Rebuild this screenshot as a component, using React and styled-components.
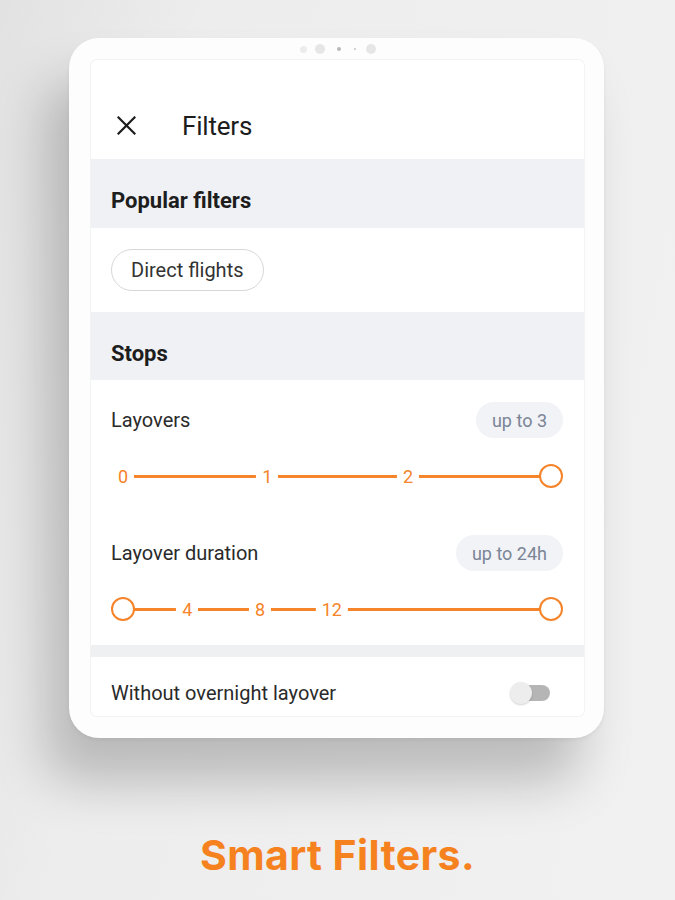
import React from "react";
import styled, { createGlobalStyle } from "styled-components";

const ORANGE = "#f5842a";

const Global = createGlobalStyle`
  html, body { margin: 0; padding: 0; }
  body {
    background: #efefef;
    font-family: Roboto, "Noto Sans", Arial, sans-serif;
  }
`;

const Page = styled.div`
  width: 675px;
  height: 900px;
  box-sizing: border-box;
  padding-top: 38px;
  display: flex;
  flex-direction: column;
  align-items: center;
  background: linear-gradient(100deg, #e2e2e2 0%, #ededed 25%, #f1f1f1 100%);
  overflow: hidden;
`;

const Tablet = styled.div`
  width: 535px;
  height: 700px;
  box-sizing: border-box;
  margin-right: 2px;
  padding: 0 20px 22px 22px;
  background: #fdfdfd;
  border-radius: 30px;
  display: flex;
  flex-direction: column;
  box-shadow: -24px 44px 52px rgba(0, 0, 0, 0.22), 0 2px 4px rgba(0, 0, 0, 0.05);
`;

const CameraBar = styled.div`
  height: 22px;
  display: flex;
  align-items: center;
  justify-content: center;
`;

const Dot = styled.span`
  width: ${(p) => p.$s}px;
  height: ${(p) => p.$s}px;
  margin-left: ${(p) => p.$ml || 0}px;
  border-radius: 50%;
  background: ${(p) => p.$c};
`;

const Screen = styled.div`
  flex: 1;
  background: #ffffff;
  border-radius: 6px;
  overflow: hidden;
  display: flex;
  flex-direction: column;
  box-shadow: 0 0 0 1px #f3f3f3;
`;

const Header = styled.div`
  height: 99px;
  flex: none;
  box-sizing: border-box;
  padding: 32px 0 0 26px;
  display: flex;
  align-items: center;
  gap: 46px;
`;

const Title = styled.div`
  font-size: 26px;
  color: #1c1c1c;
  font-weight: 400;
  letter-spacing: -0.2px;
`;

const SectionHead = styled.div`
  height: ${(p) => p.$h}px;
  flex: none;
  box-sizing: border-box;
  background: #eff1f4;
  display: flex;
  align-items: center;
  padding: 14px 20px 0;
  font-size: 22px;
  font-weight: 700;
  color: #1d1d1d;
`;

const ChipArea = styled.div`
  height: 84px;
  flex: none;
  box-sizing: border-box;
  padding: 21px 20px 0;
`;

const Chip = styled.div`
  display: inline-flex;
  align-items: center;
  height: 42px;
  box-sizing: border-box;
  padding: 0 19px;
  border: 1px solid #d6d8db;
  border-radius: 21px;
  font-size: 20px;
  color: #333;
`;

const Block = styled.div`
  flex: none;
  padding: 22px 21px 24px 20px;
  display: flex;
  flex-direction: column;
`;

const LabelRow = styled.div`
  height: 36px;
  display: flex;
  align-items: center;
  justify-content: space-between;
  margin-top: ${(p) => p.$mt || 0}px;
`;

const Label = styled.div`
  font-size: 20px;
  color: #2a2a2a;
`;

const Badge = styled.div`
  height: 36px;
  box-sizing: border-box;
  padding: 0 16px;
  display: flex;
  align-items: center;
  border-radius: 18px;
  background: #f1f3f6;
  color: #7b8597;
  font-size: 18px;
`;

const Slider = styled.div`
  position: relative;
  height: 24px;
  margin-top: 26px;
`;

const Track = styled.div`
  position: absolute;
  left: 12px;
  right: 12px;
  top: 11px;
  height: 2.5px;
  background: ${ORANGE};
`;

const Tick = styled.span`
  position: absolute;
  top: 0;
  height: 24px;
  display: flex;
  align-items: center;
  transform: translateX(-50%);
  background: #fff;
  padding: 0 6px;
  font-size: 18px;
  color: ${ORANGE};
`;

const Thumb = styled.span`
  position: absolute;
  top: 0;
  width: 24px;
  height: 24px;
  box-sizing: border-box;
  transform: translateX(-50%);
  border-radius: 50%;
  border: 2.5px solid ${ORANGE};
  background: #fff;
`;

const Divider = styled.div`
  height: 12px;
  flex: none;
  background: #eff0f2;
`;

const ToggleRow = styled.div`
  height: 72px;
  flex: none;
  display: flex;
  align-items: center;
  justify-content: space-between;
  padding: 0 34px 0 20px;
`;

const Switch = styled.div`
  position: relative;
  width: 40px;
  height: 24px;
`;

const SwitchTrack = styled.span`
  position: absolute;
  left: 6px;
  right: 0;
  top: 4px;
  height: 16px;
  border-radius: 8px;
  background: #b5b5b5;
`;

const SwitchThumb = styled.span`
  position: absolute;
  left: 0;
  top: 1px;
  width: 22px;
  height: 22px;
  border-radius: 50%;
  background: #ededed;
  box-shadow: 0 1px 2px rgba(0, 0, 0, 0.18);
`;

const Tagline = styled.div`
  margin-top: 92px;
  font-family: Inter, "Noto Sans", sans-serif;
  font-size: 41px;
  font-weight: 700;
  letter-spacing: 0.4px;
  color: #f5821f;
`;

const pos = (p) => `calc(12px + ${p} * (100% - 24px))`;

function RangeSlider({ ticks, thumbs }) {
  return (
    <Slider>
      <Track />
      {ticks.map((t) => (
        <Tick key={t.label} style={{ left: pos(t.p) }}>
          {t.label}
        </Tick>
      ))}
      {thumbs.map((p) => (
        <Thumb key={p} style={{ left: pos(p) }} />
      ))}
    </Slider>
  );
}

function CloseIcon() {
  return (
    <svg width="19" height="19" viewBox="0 0 19 19">
      <path d="M1.5 1.5 L17.5 17.5 M17.5 1.5 L1.5 17.5" stroke="#1c1c1c" strokeWidth="2.2" strokeLinecap="square" />
    </svg>
  );
}

export default function App() {
  return (
    <>
      <Global />
      <Page>
        <Tablet>
          <CameraBar>
            <Dot $s={7} $c="#ececec" />
            <Dot $s={10} $c="#e6e6e6" $ml={8} />
            <Dot $s={4} $c="#b9b9b9" $ml={12} />
            <Dot $s={2} $c="#c4c4c4" $ml={13} />
            <Dot $s={10} $c="#e6e6e6" $ml={10} />
          </CameraBar>
          <Screen>
            <Header>
              <CloseIcon />
              <Title>Filters</Title>
            </Header>
            <SectionHead $h={69}>Popular filters</SectionHead>
            <ChipArea>
              <Chip>Direct flights</Chip>
            </ChipArea>
            <SectionHead $h={68}>Stops</SectionHead>
            <Block>
              <LabelRow>
                <Label>Layovers</Label>
                <Badge>up to 3</Badge>
              </LabelRow>
              <RangeSlider
                ticks={[
                  { label: "0", p: 0 },
                  { label: "1", p: 0.337 },
                  { label: "2", p: 0.666 },
                ]}
                thumbs={[1]}
              />
              <LabelRow $mt={47}>
                <Label>Layover duration</Label>
                <Badge>up to 24h</Badge>
              </LabelRow>
              <RangeSlider
                ticks={[
                  { label: "4", p: 0.15 },
                  { label: "8", p: 0.32 },
                  { label: "12", p: 0.488 },
                ]}
                thumbs={[0, 1]}
              />
            </Block>
            <Divider />
            <ToggleRow>
              <Label>Without overnight layover</Label>
              <Switch>
                <SwitchTrack />
                <SwitchThumb />
              </Switch>
            </ToggleRow>
          </Screen>
        </Tablet>
        <Tagline>Smart Filters.</Tagline>
      </Page>
    </>
  );
}
